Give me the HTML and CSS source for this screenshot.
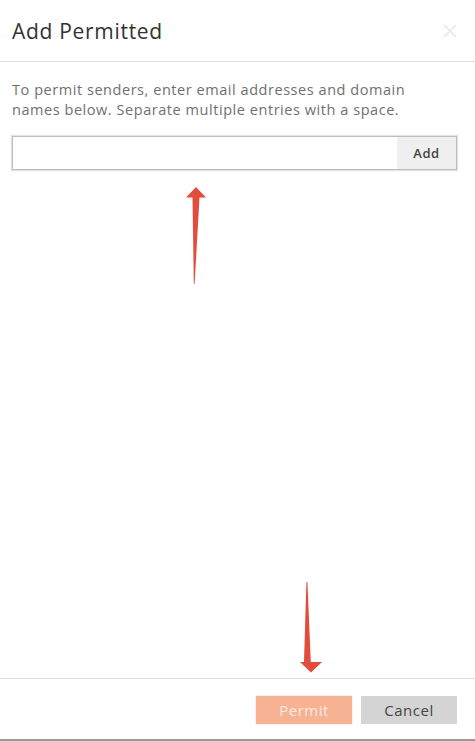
FILE: index.html
```html
<!DOCTYPE html>
<html lang="en">
<head>
    <meta charset="UTF-8">
    <title>Add Permitted</title>
    <meta name="viewport" content="width=device-width,initial-scale=1.0">
  <link rel="stylesheet" href="styles.css">
</head>
<body>
<div class="dialog">
  <div class="head">
    <h1 class="title">Add Permitted</h1>
    <svg class="close" width="14" height="14" viewBox="0 0 14 14">
      <path d="M1 1L13 13M13 1L1 13" stroke="#e6e6e6" stroke-width="1.6" fill="none"/>
    </svg>
  </div>
  <div class="main">
    <p class="desc">To permit senders, enter email addresses and domain names below. Separate multiple entries with a space.</p>
    <div class="entry">
      <input class="entry-input" type="text">
      <button class="entry-add">Add</button>
    </div>
  </div>
  <div class="foot">
    <button class="btn btn-permit">Permit</button>
    <button class="btn btn-cancel">Cancel</button>
  </div>
</div>

<!-- annotation arrows drawn over the screenshot -->
<svg class="marks" width="475" height="741" viewBox="0 0 475 741">
  <polygon fill="#e34b3b" points="196,187 206,197.5 199.5,197.5 194.6,284 193.8,284 192.5,197.5 186,197.5"/>
  <polygon fill="#e34b3b" points="306.4,582 307.4,582 310.8,662 322,662 311,672.5 300,662 304,662"/>
</svg>
</body>
</html>
```

FILE: styles.css
```css
*{
  margin: 0;
  padding: 0;
  box-sizing: border-box;
}
body{
  font-family: "Open Sans", "Noto Sans", sans-serif;
  background: #fff;
}
.dialog{
  height: 100vh;
  display: flex;
  flex-direction: column;
}
.head{
  height: 62px;
  flex-shrink: 0;
  border-bottom: 1px solid #dcdcdc;
  padding: 0 18px 0 12px;
  display: flex;
  align-items: flex-start;
  justify-content: space-between;
}
.title{
  font-size: 21px;
  font-weight: normal;
  letter-spacing: 0.7px;
  line-height: 28px;
  color: #333;
  padding-top: 17px;
}
.close{
  margin-top: 24px;
}
.main{
  flex: 1;
  padding: 18px 18px 0 12px;
}
.desc{
  font-size: 14.5px;
  letter-spacing: 0.55px;
  line-height: 20px;
  color: #707070;
  width: 420px;
}
.entry{
  margin-top: 16px;
  height: 34px;
  display: flex;
  border: 1px solid #bdbdbd;
  box-shadow: 0 0 1px 1px #e2e2e2;
}
.entry-input{
  flex: 1;
  border: none;
  outline: none;
  background: #fff;
}
.entry-add{
  width: 59px;
  border: none;
  background: #efefef;
  font-family: inherit;
  font-size: 13px;
  letter-spacing: 0.6px;
  font-weight: 600;
  color: #444;
}
.foot{
  height: 63px;
  flex-shrink: 0;
  border-top: 1px solid #dcdcdc;
  border-bottom: 2px solid #9a9a9a;
  padding: 17px 18px 0 0;
  display: flex;
  justify-content: flex-end;
  align-items: flex-start;
  gap: 9px;
}
.btn{
  width: 96px;
  height: 28px;
  border: none;
  font-family: inherit;
  font-size: 15px;
  letter-spacing: 0.5px;
}
.btn-permit{
  background: #f7b193;
  color: #fde9e1;
  box-shadow: 0 0 1px #f3a482;
}
.btn-cancel{
  background: #d4d4d4;
  color: #444;
}
.marks{
  position: absolute;
  left: 0;
  top: 0;
  pointer-events: none;
}
```
